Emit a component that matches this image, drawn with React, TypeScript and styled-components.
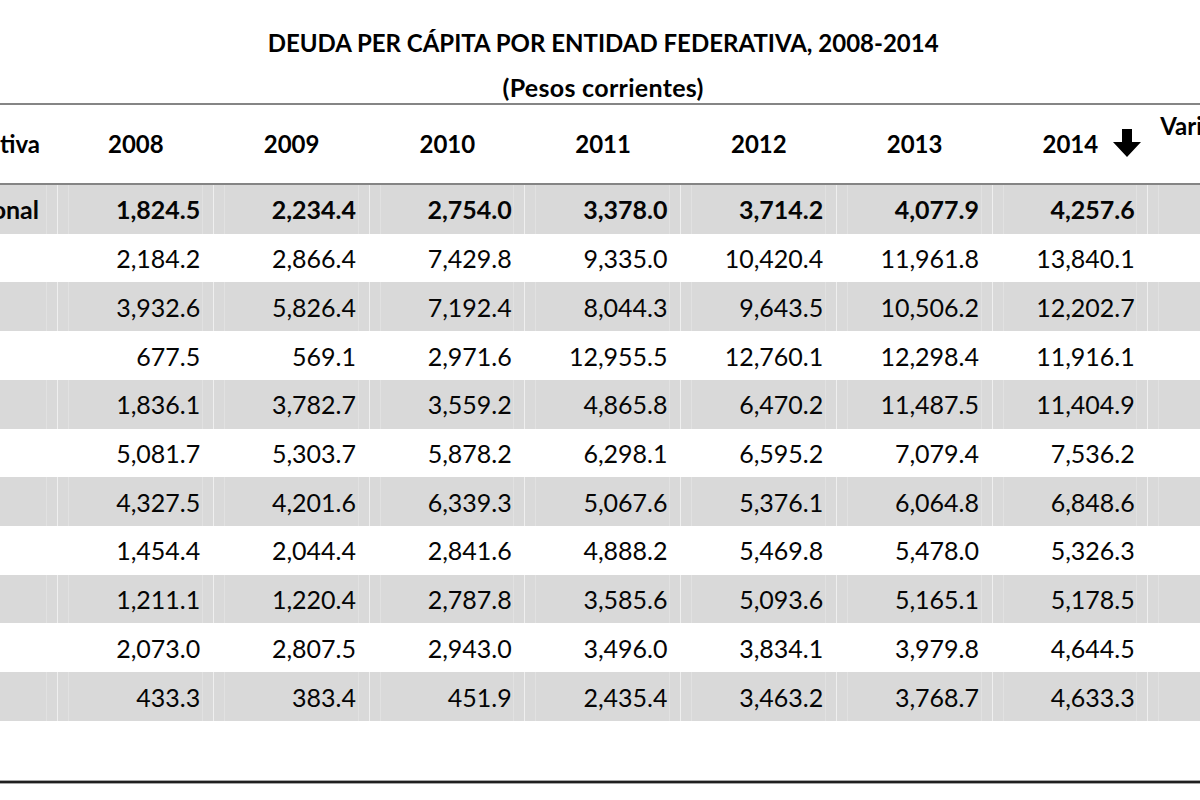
import React from "react";
import styled, { createGlobalStyle } from "styled-components";

const GlobalStyle = createGlobalStyle`
  html, body {
    margin: 0;
    padding: 0;
    background: #ffffff;
    overflow: hidden;
  }
  body {
    font-family: Lato, "Open Sans", "Liberation Sans", sans-serif;
    color: #000;
  }
`;

const COLS = "318px repeat(7, 155.75px) 220px";

const Viewport = styled.div`
  width: 1200px;
  height: 800px;
  overflow: hidden;
  background: #fff;
`;

const Sheet = styled.div`
  margin-left: -260px;
  width: max-content;
  display: grid;
  grid-template-columns: ${COLS};
`;

const TitleBlock = styled.div`
  grid-column: 2 / 9;
  display: flex;
  flex-direction: column;
  align-items: center;
  padding-top: 29px;
  padding-bottom: 2px;
`;

const Title = styled.h1`
  margin: 0;
  font-size: 24px;
  line-height: 28px;
  font-weight: 700;
  white-space: nowrap;
`;

const Subtitle = styled.h2`
  margin: 16px 0 0;
  font-size: 25px;
  line-height: 28px;
  font-weight: 700;
  letter-spacing: 0.3px;
  white-space: nowrap;
`;

const HeaderRow = styled.div`
  grid-column: 1 / -1;
  display: grid;
  grid-template-columns: ${COLS};
  height: 78px;
  border-top: 2px solid #858585;
  border-bottom: 2px solid #858585;
`;

const HeadCell = styled.div<{ $align?: "left" | "center" | "right"; $top?: boolean }>`
  position: relative;
  display: flex;
  align-items: ${(p) => (p.$top ? "flex-start" : "center")};
  justify-content: ${(p) =>
    p.$align === "left" ? "flex-start" : p.$align === "right" ? "flex-end" : "center"};
  padding: ${(p) => (p.$top ? "7px 12px 0" : "0 18px")};
  font-size: 24px;
  line-height: 28px;
  font-weight: 700;
  white-space: nowrap;
  overflow: hidden;
`;

const SortArrow = styled.svg`
  position: absolute;
  right: 7px;
  top: 24px;
  width: 28px;
  height: 28px;
`;

const DataRow = styled.div<{ $shaded: boolean }>`
  grid-column: 1 / -1;
  display: grid;
  grid-template-columns: ${COLS};
  height: 48.72px;
  background: ${(p) => (p.$shaded ? "#d9d9d9" : "#ffffff")};
`;

const Cell = styled.div<{ $shaded: boolean; $bold?: boolean }>`
  display: flex;
  align-items: center;
  justify-content: flex-end;
  padding: 0 12.5px 0 0;
  font-size: 25px;
  font-weight: ${(p) => (p.$bold ? 700 : 400)};
  color: #050505;
  white-space: nowrap;
  overflow: hidden;
  ${(p) =>
    p.$shaded
      ? `
    border-right: 1.5px solid #efefef;
    background-image:
      linear-gradient(to right, transparent 10px, #e1e1e1 10px, #e1e1e1 11px, transparent 11px),
      linear-gradient(to left, transparent 10px, #e1e1e1 10px, #e1e1e1 11px, transparent 11px);
  `
      : `border-right: 1.5px solid transparent;`}
`;

const LabelCell = styled(Cell)<{ $nacional?: boolean }>`
  justify-content: ${(p) => (p.$nacional ? "flex-end" : "flex-start")};
  padding-left: ${(p) => (p.$nacional ? "0" : "8px")};
  padding-right: ${(p) => (p.$nacional ? "18px" : "0")};
`;

const BottomRule = styled.div`
  grid-column: 1 / -1;
  margin-top: 59px;
  height: 2px;
  background: #1f1f1f;
  border-top: 1px solid #a5a5a5;
  border-bottom: 1px solid #a5a5a5;
`;

type Row = { name: string; values: number[]; nacional?: boolean };

const rows: Row[] = [
  { name: "Nacional", nacional: true, values: [1824.5, 2234.4, 2754.0, 3378.0, 3714.2, 4077.9, 4257.6] },
  { name: "Quintana Roo", values: [2184.2, 2866.4, 7429.8, 9335.0, 10420.4, 11961.8, 13840.1] },
  { name: "Nuevo León", values: [3932.6, 5826.4, 7192.4, 8044.3, 9643.5, 10506.2, 12202.7] },
  { name: "Coahuila", values: [677.5, 569.1, 2971.6, 12955.5, 12760.1, 12298.4, 11916.1] },
  { name: "Chihuahua", values: [1836.1, 3782.7, 3559.2, 4865.8, 6470.2, 11487.5, 11404.9] },
  { name: "Distrito Federal", values: [5081.7, 5303.7, 5878.2, 6298.1, 6595.2, 7079.4, 7536.2] },
  { name: "Sonora", values: [4327.5, 4201.6, 6339.3, 5067.6, 5376.1, 6064.8, 6848.6] },
  { name: "Veracruz", values: [1454.4, 2044.4, 2841.6, 4888.2, 5469.8, 5478.0, 5326.3] },
  { name: "Michoacán", values: [1211.1, 1220.4, 2787.8, 3585.6, 5093.6, 5165.1, 5178.5] },
  { name: "Baja California", values: [2073.0, 2807.5, 2943.0, 3496.0, 3834.1, 3979.8, 4644.5] },
  { name: "Nayarit", values: [433.3, 383.4, 451.9, 2435.4, 3463.2, 3768.7, 4633.3] },
];

const years = [2008, 2009, 2010, 2011, 2012, 2013, 2014];

const fmt = (n: number) =>
  n.toLocaleString("en-US", { minimumFractionDigits: 1, maximumFractionDigits: 1 });

export default function App() {
  return (
    <Viewport>
      <GlobalStyle />
      <Sheet>
        <TitleBlock>
          <Title>DEUDA PER CÁPITA POR ENTIDAD FEDERATIVA, 2008-2014</Title>
          <Subtitle>(Pesos corrientes)</Subtitle>
        </TitleBlock>

        <HeaderRow>
          <HeadCell $align="right">Entidad Federativa</HeadCell>
          {years.map((y) => (
            <HeadCell key={y}>
              {y}
              {y === 2014 && (
                <SortArrow viewBox="0 0 28 28" aria-hidden="true">
                  <path d="M9 0 H19 V13 H28 L14 28 L0 13 H9 Z" fill="#000" />
                </SortArrow>
              )}
            </HeadCell>
          ))}
          <HeadCell $align="left" $top>
            Variación 2008-2014 (%)
          </HeadCell>
        </HeaderRow>

        {rows.map((r, i) => {
          const shaded = i % 2 === 0;
          const first = r.values[0];
          const last = r.values[r.values.length - 1];
          const change = ((last / first - 1) * 100).toFixed(1);
          return (
            <DataRow key={r.name} $shaded={shaded}>
              <LabelCell $shaded={shaded} $bold={r.nacional} $nacional={r.nacional}>
                {r.name}
              </LabelCell>
              {r.values.map((v, j) => (
                <Cell key={j} $shaded={shaded} $bold={r.nacional}>
                  {fmt(v)}
                </Cell>
              ))}
              <Cell $shaded={shaded} $bold={r.nacional}>
                {change}
              </Cell>
            </DataRow>
          );
        })}

        <BottomRule />
      </Sheet>
    </Viewport>
  );
}
